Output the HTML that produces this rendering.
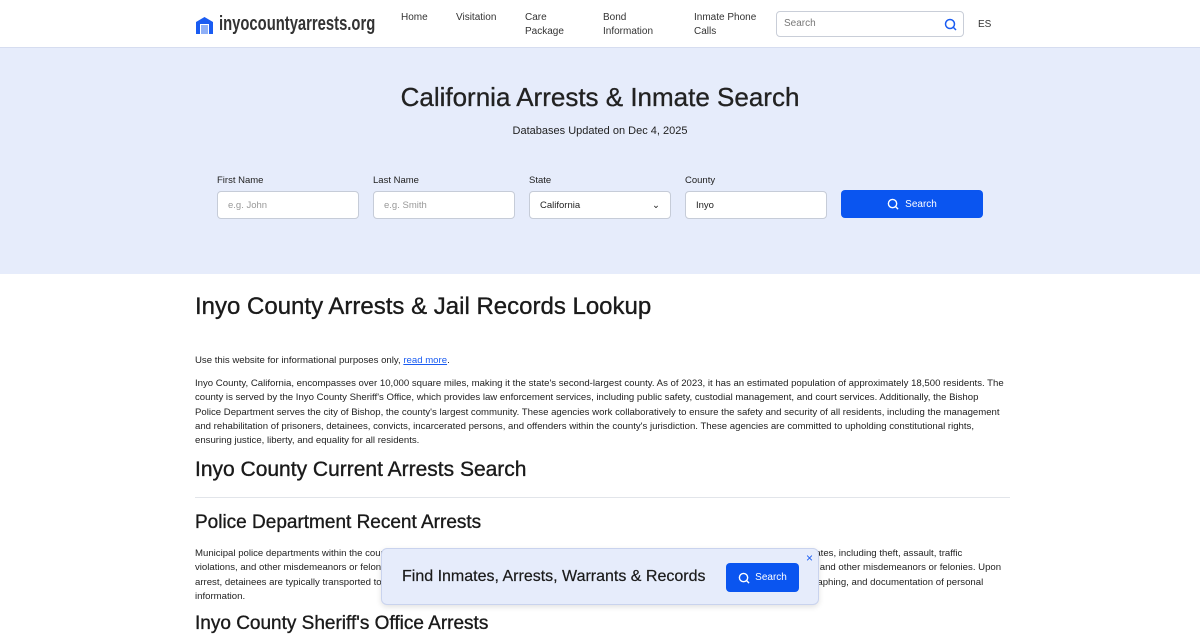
<!DOCTYPE html>
<html><head><meta charset="utf-8"><style>
*{box-sizing:border-box;margin:0;padding:0}
body{width:1200px;height:620px;overflow:hidden;background:#fff;font-family:"Liberation Sans",sans-serif;color:#1a1a1a;position:relative}
.hdr{height:48px;border-bottom:1px solid #d6ddf0;position:relative}
.logo{position:absolute;left:195px;top:13px;font-weight:bold;font-size:20px;color:#333;display:flex;align-items:center;gap:5px}
.logo span{display:inline-block;transform:scaleX(0.74);transform-origin:left center}
.nav a{position:absolute;top:11px;font-size:10px;color:#333;line-height:14px;text-decoration:none}
.sbox{position:absolute;left:776px;top:11px;width:188px;height:26px;border:1px solid #c9ced8;border-radius:4px;font-size:10px;color:#777;padding:6px 7px}
.hero{background:#e6ecfb;height:226px;position:relative;text-align:center}
.hero h1{position:absolute;top:34px;width:100%;font-size:26px;font-weight:normal;color:#222;-webkit-text-stroke:0.3px #222}
.hero .up{position:absolute;top:77px;width:100%;font-size:11px;color:#222}
.f{position:absolute;top:127px;font-size:9.5px;color:#222;text-align:left}
.f div.i{margin-top:5px;width:142px;height:28px;background:#fff;border:1px solid #c6ccd8;border-radius:4px;font-size:9.5px;color:#999;padding:8px 10px}
.btn{position:absolute;left:841px;top:142px;width:142px;height:28px;background:#0a55f0;border-radius:4px;color:#fff;font-size:10px;display:flex;align-items:center;justify-content:center;gap:6px}
.c{position:absolute;left:195px;width:815px}
p.t{font-size:9.6px;line-height:14.3px;color:#222}
h2{font-weight:normal;-webkit-text-stroke:0.35px #1a1a1a}
</style></head><body>
<div class="hdr">
<div class="logo"><svg width="19" height="18" viewBox="0 0 19 18"><path d="M1 18V6L9.5 1 18 6v12h-4V8H5v10z" fill="#1a5cf2"/><rect x="6" y="9" width="7" height="9" fill="#8fb0f7"/></svg><span>inyocountyarrests.org</span></div>
<div class="nav"><a style="left:401px">Home</a><a style="left:456px">Visitation</a><a style="left:525px">Care<br>Package</a><a style="left:603px">Bond<br>Information</a><a style="left:694px">Inmate Phone<br>Calls</a><a style="left:978px;top:18px">ES</a></div>
<div class="sbox">Search<svg style="position:absolute;right:6px;top:6px" width="13" height="13" viewBox="0 0 13 13"><circle cx="6" cy="6" r="4.5" fill="none" stroke="#1a5cf2" stroke-width="1.5"/><path d="M9.5 9.5L12 12" stroke="#1a5cf2" stroke-width="1.5"/></svg></div>
</div>
<div class="hero">
<h1>California Arrests &amp; Inmate Search</h1>
<div class="up">Databases Updated on Dec 4, 2025</div>
<div class="f" style="left:217px">First Name<div class="i">e.g. John</div></div>
<div class="f" style="left:373px">Last Name<div class="i">e.g. Smith</div></div>
<div class="f" style="left:529px">State<div class="i" style="color:#222">California<span style="float:right">⌄</span></div></div>
<div class="f" style="left:685px">County<div class="i" style="color:#222">Inyo</div></div>
<div class="btn"><svg width="12" height="12" viewBox="0 0 13 13"><circle cx="6" cy="6" r="4.5" fill="none" stroke="#fff" stroke-width="1.5"/><path d="M9.5 9.5L12 12" stroke="#fff" stroke-width="1.5"/></svg>Search</div>
</div>
<div class="c" style="top:293px"><h2 style="font-size:24px">Inyo County Arrests &amp; Jail Records Lookup</h2></div>
<div class="c" style="top:354px"><p class="t">Use this website for informational purposes only, <span style="color:#1a5cf2;text-decoration:underline">read more</span>.</p></div>
<div class="c" style="top:377px;width:812px"><p class="t">Inyo County, California, encompasses over 10,000 square miles, making it the state's second-largest county. As of 2023, it has an estimated population of approximately 18,500 residents. The county is served by the Inyo County Sheriff's Office, which provides law enforcement services, including public safety, custodial management, and court services. Additionally, the Bishop Police Department serves the city of Bishop, the county's largest community. These agencies work collaboratively to ensure the safety and security of all residents, including the management and rehabilitation of prisoners, detainees, convicts, incarcerated persons, and offenders within the county's jurisdiction. These agencies are committed to upholding constitutional rights, ensuring justice, liberty, and equality for all residents.</p></div>
<div class="c" style="top:458px"><h2 style="font-size:21px">Inyo County Current Arrests Search</h2></div>
<div class="c" style="top:497px;border-top:1px solid #e2e5ea;height:1px"></div>
<div class="c" style="top:512px"><h2 style="font-size:19px">Police Department Recent Arrests</h2></div>
<div class="c" style="top:547px;width:812px"><p class="t">Municipal police departments within the county handle arrests for offenses committed within city limits. These departments address various crime rates, including theft, assault, traffic violations, and other misdemeanors or felonies. Arrests may result from investigations, warrants, or on-the-spot incidents involving traffic violations, and other misdemeanors or felonies. Upon arrest, detainees are typically transported to the county jail for booking, where standard procedures are followed that include fingerprinting, photographing, and documentation of personal information.</p></div>
<div class="c" style="top:613px"><h2 style="font-size:19px">Inyo County Sheriff's Office Arrests</h2></div>
<div style="position:absolute;left:381px;top:548px;width:438px;height:57px;background:#e6ecfb;border:1px solid #c9d3ee;border-radius:6px;box-shadow:0 2px 6px rgba(0,0,0,.12)">
<div style="position:absolute;left:20px;top:19px;font-size:16px;color:#1a1a1a;-webkit-text-stroke:0.2px #1a1a1a">Find Inmates, Arrests, Warrants &amp; Records</div>
<div style="position:absolute;left:344px;top:14px;width:73px;height:29px;background:#0a55f0;border-radius:4px;color:#fff;font-size:10px;display:flex;align-items:center;justify-content:center;gap:5px"><svg width="12" height="12" viewBox="0 0 13 13"><circle cx="6" cy="6" r="4.5" fill="none" stroke="#fff" stroke-width="1.5"/><path d="M9.5 9.5L12 12" stroke="#fff" stroke-width="1.5"/></svg>Search</div>
<div style="position:absolute;right:5px;top:2px;font-size:12px;color:#1a5cf2">×</div>
</div>
</body></html>
